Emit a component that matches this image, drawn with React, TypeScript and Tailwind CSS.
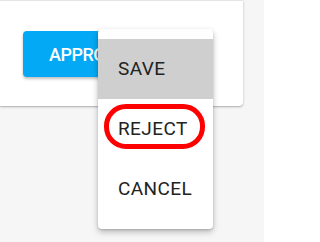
export default function App() {
  return (
    <div
      className="relative h-[242px] w-[264px] overflow-hidden bg-[#f6f6f6]"
      style={{ fontFamily: "Roboto, 'Liberation Sans', sans-serif" }}
    >
      <div className="h-[106px] w-[243px] rounded-br-[4px] border-t border-[#e6e6e6] bg-white pl-[23px] pt-[30px] shadow-[0_1px_3px_rgba(0,0,0,0.2),0_1px_1px_rgba(0,0,0,0.12)]">
        <button
          type="button"
          className="flex h-[46px] w-[150px] items-center rounded-[4px] bg-[#03a9f4] pl-[26px] text-[18px] font-medium tracking-[-0.5px] text-white shadow-[0_2px_3px_rgba(0,0,0,0.25)]"
        >
          APPROVE
        </button>
      </div>

      <ul className="absolute left-[98px] top-[29px] w-[115px] rounded-[4px] bg-white py-[10px] text-[19px] tracking-[0.4px] text-[#222222] shadow-[0_3px_6px_rgba(0,0,0,0.25),0_1px_2px_rgba(0,0,0,0.15)]">
        <li className="flex h-[60px] items-center bg-[#cfcfcf] pl-[20px]">SAVE</li>
        <li className="relative flex h-[60px] items-center pl-[20px]">
          REJECT
          <span className="absolute left-[6px] top-[5px] h-[45px] w-[101px] rounded-[22px] border-[5px] border-[#ff0000]" />
        </li>
        <li className="flex h-[60px] items-center pl-[20px]">CANCEL</li>
      </ul>
    </div>
  );
}
